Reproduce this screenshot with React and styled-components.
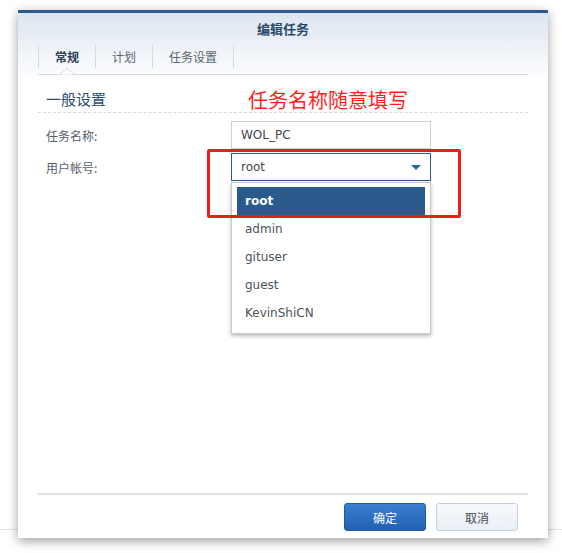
import React from "react";
import styled, { createGlobalStyle } from "styled-components";

const Global = createGlobalStyle`
  html, body { margin: 0; padding: 0; background: #fff; }
  body { font-family: "DejaVu Sans", "Noto Sans CJK SC", sans-serif; }
  * { box-sizing: border-box; }
`;

const Page = styled.div`
  width: 562px;
  height: 553px;
  padding: 10px 14px 0 18px;
  background: linear-gradient(
    to bottom,
    transparent 529px,
    #e4e4e4 529px,
    #e4e4e4 530px,
    transparent 530px
  );
`;

const Dialog = styled.div`
  width: 530px;
  height: 528px;
  display: flex;
  flex-direction: column;
  border-top: 3px solid #2d5a8e;
  background: linear-gradient(to bottom, #dce5ef 0px, #f6f8fb 50px, #ffffff 70px);
  box-shadow: 0 3px 10px rgba(0, 0, 0, 0.38);
`;

const Header = styled.div`
  height: 30px;
  display: flex;
  align-items: center;
  justify-content: center;
  font-family: "Noto Sans CJK SC", sans-serif;
  font-size: 13px;
  font-weight: 700;
  color: #2b4a6b;
`;

const TabBar = styled.div`
  margin: 0 20px;
  padding: 2px 0 6px;
  display: flex;
  border-bottom: 1px solid #d6dbe1;
`;

const Tab = styled.div`
  position: relative;
  height: 23px;
  padding: 0 16px;
  display: flex;
  align-items: center;
  font-family: "Noto Sans CJK SC", sans-serif;
  font-size: 12px;
  font-weight: ${(p) => (p.$active ? 700 : 400)};
  color: ${(p) => (p.$active ? "#2a3f58" : "#5b6672")};
  border-right: 1px solid #d3dce6;
  ${(p) => (p.$first ? "border-left: 1px solid #d3dce6;" : "")}
`;

const Notch = styled.svg`
  position: absolute;
  left: 50%;
  bottom: -7px;
  margin-left: -7px;
`;

const Body = styled.div`
  position: relative;
  flex: 1;
  margin: 0 20px;
  padding-top: 15px;
`;

const SectionTitle = styled.div`
  padding: 0 0 4px 8px;
  line-height: 18px;
  font-family: "Noto Sans CJK SC", sans-serif;
  font-size: 15px;
  color: #2b4e74;
  border-bottom: 1px dashed #cfdbe7;
`;

const Form = styled.div`
  margin-top: 8px;
  padding-left: 8px;
  display: flex;
  flex-direction: column;
  gap: 4px;
`;

const Row = styled.div`
  display: flex;
  align-items: center;
`;

const Label = styled.div`
  width: 185px;
  font-family: "Noto Sans CJK SC", sans-serif;
  font-size: 12px;
  color: #56606b;
`;

const Field = styled.div`
  position: relative;
  width: 200px;
  height: 28px;
  padding-left: 9px;
  display: flex;
  align-items: center;
  font-size: 12px;
  color: #3f4750;
  background: #fff;
  border: 1px solid ${(p) => (p.$focused ? "#2a5d94" : "#c8d0d9")};
`;

const Arrow = styled.span`
  position: absolute;
  right: 9px;
  top: 11px;
  width: 0;
  height: 0;
  border-left: 5px solid transparent;
  border-right: 5px solid transparent;
  border-top: 5px solid #1f66bf;
`;

const Menu = styled.div`
  position: absolute;
  left: -1px;
  top: 28px;
  width: 200px;
  padding: 4px 5px 6px;
  background: #fff;
  border: 1px solid #c3cad3;
  box-shadow: 0 2px 4px rgba(0, 0, 0, 0.28);
  z-index: 2;
`;

const Option = styled.div`
  height: 28px;
  padding-left: 8px;
  display: flex;
  align-items: center;
  font-size: 12px;
  font-weight: ${(p) => (p.$selected ? 700 : 400)};
  color: ${(p) => (p.$selected ? "#ffffff" : "#4b535c")};
  background: ${(p) => (p.$selected ? "#2b5a8c" : "transparent")};
`;

const Annotation = styled.div`
  position: absolute;
  left: 210px;
  top: 13px;
  font-family: "Noto Sans CJK SC", sans-serif;
  font-size: 20px;
  line-height: 24px;
  color: #ff1e1e;
  z-index: 3;
`;

const RedBox = styled.div`
  position: absolute;
  left: 169px;
  top: 74px;
  width: 254px;
  height: 69px;
  border: 3px solid #f21b1b;
  border-radius: 2px;
  z-index: 3;
  pointer-events: none;
`;

const Footer = styled.div`
  margin: 0 20px;
  padding: 8px 10px 7px 0;
  display: flex;
  justify-content: flex-end;
  gap: 10px;
  border-top: 2px solid #e2e2e2;
`;

const Button = styled.button`
  width: 82px;
  height: 28px;
  padding: 0;
  border-radius: 3px;
  font-family: "Noto Sans CJK SC", sans-serif;
  font-size: 12px;
  cursor: pointer;
  color: ${(p) => (p.$primary ? "#ffffff" : "#454c54")};
  border: 1px solid ${(p) => (p.$primary ? "#2459a0" : "#c6d1dd")};
  background: ${(p) =>
    p.$primary
      ? "linear-gradient(to bottom, #3a80d1, #2361b1)"
      : "linear-gradient(to bottom, #f7f9fc, #e9eff6)"};
`;

const users = ["root", "admin", "gituser", "guest", "KevinShiCN"];

export default function App() {
  return (
    <>
      <Global />
      <Page>
        <Dialog>
          <Header>编辑任务</Header>
          <TabBar>
            <Tab $first $active>
              常规
              <Notch width="14" height="8" viewBox="0 0 14 8">
                <path d="M0 7.5 L7 1 L14 7.5" fill="#fff" stroke="#d0d5db" strokeWidth="1" />
              </Notch>
            </Tab>
            <Tab>计划</Tab>
            <Tab>任务设置</Tab>
          </TabBar>
          <Body>
            <SectionTitle>一般设置</SectionTitle>
            <Form>
              <Row>
                <Label>任务名称:</Label>
                <Field>WOL_PC</Field>
              </Row>
              <Row>
                <Label>用户帐号:</Label>
                <Field $focused>
                  root
                  <Arrow />
                  <Menu>
                    {users.map((u) => (
                      <Option key={u} $selected={u === "root"}>
                        {u}
                      </Option>
                    ))}
                  </Menu>
                </Field>
              </Row>
            </Form>
            <Annotation>任务名称随意填写</Annotation>
            <RedBox />
          </Body>
          <Footer>
            <Button $primary>确定</Button>
            <Button>取消</Button>
          </Footer>
        </Dialog>
      </Page>
    </>
  );
}
